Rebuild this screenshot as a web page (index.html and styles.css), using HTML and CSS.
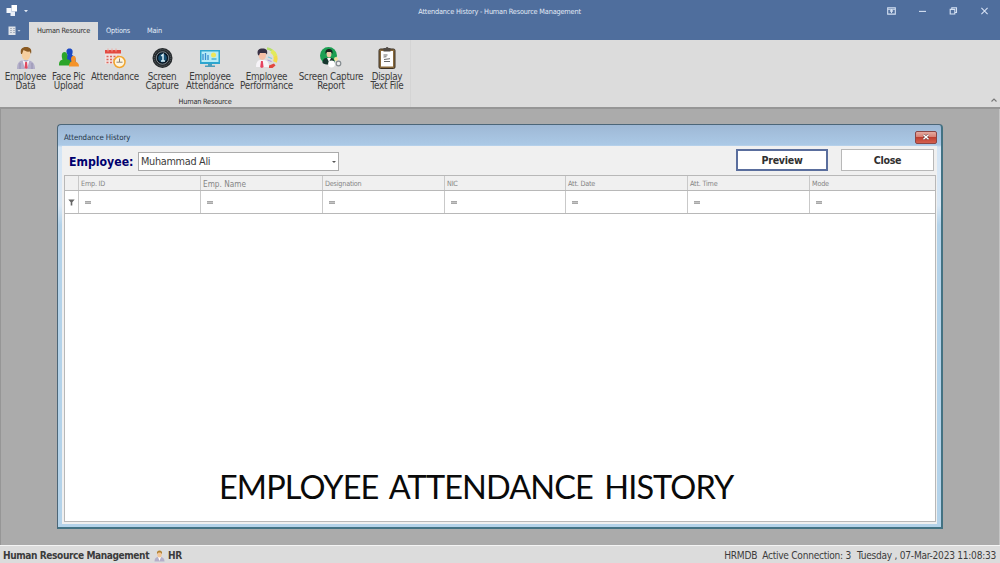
FILE: index.html
```html
<!DOCTYPE html>
<html lang="en">
<head>
    <meta charset="UTF-8">
    <meta name="viewport" content="width=device-width, initial-scale=1.0">
    <title>Attendance History - Human Resource Management</title>
    <link rel="stylesheet" href="styles.css">
</head>
<body>
    <header class="title-bar">
        <div class="quick-access">
            <svg width="24" height="14" viewBox="0 0 24 14">
                <path d="M5.500 1H11v6.500H5.500z" fill="#fff"/>
                <path d="M.5 4h5v5h-5z" fill="#f4f7fc"/>
                <path d="M4.500 7.500H9V12H4.500z" fill="#e9eff8"/>
                <path d="M18 6h4l-2 2.300z" fill="#dfe7f3"/>
            </svg>
        </div>
        <div class="app-title">Attendance History - Human Resource Management</div>
        <div class="window-buttons">
            <svg width="9" height="8" viewBox="0 0 9 8"><path d="M.7.700h7.600v6.400H.7zM.7 2.200h7.600M4.500 6V3M3 4.400L4.500 3 6 4.400"/></svg>
            <svg width="9" height="8" viewBox="0 0 9 8"><path d="M1 4.400h7"/></svg>
            <svg width="9" height="8" viewBox="0 0 9 8"><path d="M1.200 2.400h4.600v4.600H1.200zM2.800 2.400V.8h4.700v4.700H5.800"/></svg>
            <svg width="9" height="8" viewBox="0 0 9 8"><path d="M1.400.9l6.200 6.200M7.600.9L1.400 7.100"/></svg>
        </div>
    </header>

    <nav class="tabs">
        <div class="file-tab">
            <svg width="14" height="10" viewBox="0 0 14 10">
                <path d="M.5.500h7v8.500h-7z" fill="#dfe3e9"/>
                <path d="M2 2.500h2M2 4.500h2M2 6.500h2M5 2.500h2M5 4.500h2M5 6.500h2" stroke="#a3adbb" stroke-width=".9"/>
                <path d="M9.500 4h3L11 5.700z" fill="#b9c8de"/>
            </svg>
        </div>
        <div class="tab active">Human Resource</div>
        <div class="tab options">Options</div>
        <div class="tab main">Main</div>
    </nav>

    <section class="ribbon">
        <div class="ribbon-group">
            <div class="ribbon-items">
                <div class="ribbon-item w45">
                    <svg width="22" height="24" viewBox="0 0 22 24">
                        <path d="M2 23c0-6 2-8 6-9h5c4 1 7 3 7 9z" fill="#b3afca"/>
                        <path d="M7.500 14l3.500 2 3.500-2L12 23h-2z" fill="#f5f1f6"/>
                        <path d="M10.200 16h1.800l.7 6-1.600 1-1.600-1z" fill="#e0485f"/>
                        <path d="M5 17v6M17 17v6" stroke="#918ca8" stroke-width=".8"/>
                        <ellipse cx="11" cy="8.600" rx="4.300" ry="5.600" fill="#f6cf9f"/>
                        <path d="M6 8C5 3 7 1 11 1s6.200 2 5 7l-1.300-2.500C12 6 10 5 8.500 4L7 8z" fill="#8a5a22"/>
                    </svg>
                    <span>Employee<br>Data</span>
                </div>
                <div class="ribbon-item w41">
                    <svg width="22" height="24" viewBox="0 0 22 24">
                        <path d="M8 18c0-5-1-7 1.500-9-2-4-1-6.500 2-6.500s4 2.500 2.500 6.500c3 1 4 4 4 9z" fill="#1b49c4"/>
                        <path d="M1 19.500c0-4 1-5 3.500-6C3 9 4 6 6.500 6S10 9 9 13c3 1 4.500 2 4.500 6.500z" fill="#2ba52a"/>
                        <path d="M11 20.500c0-3 1-4 2.500-5-1-3.500 0-5.500 2-5.500s3 2 2 5.500c2 1 3.500 2 3.500 5z" fill="#f4932a"/>
                    </svg>
                    <span>Face Pic<br>Upload</span>
                </div>
                <div class="ribbon-item w52">
                    <svg width="22" height="24" viewBox="0 0 22 24">
                        <path d="M1 5h16v13H1z" fill="#f0e2e0"/>
                        <path d="M1 4h16v3.500H1z" fill="#e34a40"/>
                        <path d="M4 2.500v3M8 2.500v3M12 2.500v3" stroke="#f0a8a0"/>
                        <path d="M2.500 10.500h13M2.500 13.500h10M2.500 16.500h10" stroke="#dd665b" stroke-width="1.700" stroke-dasharray="2 1.500"/>
                        <circle cx="15.500" cy="16" r="5.500" fill="#fff5dd" stroke="#f0a52e" stroke-width="1.500"/>
                        <path d="M15.500 12.500v3.700h3M12.500 16.200h3" fill="none" stroke="#8c8375"/>
                    </svg>
                    <span>Attendance</span>
                </div>
                <div class="ribbon-item w42">
                    <svg width="22" height="24" viewBox="0 0 22 24">
                        <circle cx="11.500" cy="12" r="10" fill="#25292c"/>
                        <circle cx="11.500" cy="12" r="8.300" fill="none" stroke="#60676b" stroke-dasharray="1 1"/>
                        <circle cx="11.500" cy="12" r="6.200" fill="#07131f" stroke="#a5b1b7" stroke-width=".7"/>
                        <circle cx="11.500" cy="12" r="4.400" fill="#174e70"/>
                        <path d="M10.200 10l1.800-1.500V15M10 15h4" fill="none" stroke="#d9f0f7" stroke-width="1.500"/>
                    </svg>
                    <span>Screen<br>Capture</span>
                </div>
                <div class="ribbon-item w54">
                    <svg width="22" height="24" viewBox="0 0 22 24">
                        <path d="M1 4h20v14H1z" fill="#2da6cf"/>
                        <path d="M2.500 5.500h17v10.500h-17z" fill="#b6ecf7"/>
                        <path d="M4 8v6M6.500 7v7M9 9v5" stroke="#388fd0" stroke-width="1.300"/>
                        <circle cx="14.500" cy="9" r="2.500" fill="#efe65a"/>
                        <path d="M12.500 13h5" stroke="#3aa9cd" stroke-width="1.300"/>
                        <path d="M9 18h4v1.500h3V21H6v-1.500h3z" fill="#4b9dba"/>
                    </svg>
                    <span>Employee<br>Attendance</span>
                </div>
                <div class="ribbon-item w59">
                    <svg width="24" height="24" viewBox="0 0 24 24">
                        <path d="M12 2.500a10 10 0 0 1 5 2" stroke="#b7e06d" stroke-width="2.500" fill="none"/>
                        <path d="M16.500 5a9 9 0 0 1 4 5" stroke="#e2ea5c" stroke-width="4" fill="none"/>
                        <path d="M20.300 10a9 9 0 0 1-.3 6" stroke="#f3dc48" stroke-width="4" fill="none"/>
                        <path d="M14 19.500l5-2 1.500 2-3 2.500h-3.500z" fill="#e2473e"/>
                        <path d="M1 21c0-5 2-6.500 4-7h4c3 .5 5 2 5 7z" fill="#f7f4f8"/>
                        <path d="M6 15h1.800l.8 6-1.700 1-1.700-1z" fill="#e64460"/>
                        <ellipse cx="7.300" cy="9" rx="3.700" ry="5" fill="#f6bfa6"/>
                        <path d="M3 9C1.500 4 4 2.500 7.500 2.500S13 4 12 8.500L10.500 7H5L4 9.500z" fill="#373044"/>
                        <path d="M13 11l4 1.500" stroke="#7dc7e0" stroke-width="1.300"/>
                        <path d="M12.500 14l4 1.500" stroke="#a99be0"/>
                    </svg>
                    <span>Employee<br>Performance</span>
                </div>
                <div class="ribbon-item w70">
                    <svg width="24" height="24" viewBox="0 0 24 24">
                        <circle cx="9.500" cy="9.500" r="8.500" fill="#1b9f52"/>
                        <path d="M3.500 17c0-4 2-5 4-5h4c3 0 4 2 4 5-3 2-9 2-12 0z" fill="#16372e"/>
                        <path d="M8 12h4l-2 4z" fill="#fff"/>
                        <ellipse cx="10" cy="7.800" rx="2.400" ry="3.800" fill="#efc8a6"/>
                        <path d="M6.500 8C6 4 8 3 10 3s4.200 1 3.500 5L12 6H8z" fill="#192622"/>
                        <circle cx="12.500" cy="18" r="3.400" fill="#fff"/>
                        <circle cx="17" cy="13" r="2" fill="#f3dfa0"/>
                        <circle cx="19.500" cy="17.500" r="2.300" fill="#eee" stroke="#858c90" stroke-width="1.200"/>
                    </svg>
                    <span>Screen Capture<br>Report</span>
                </div>
                <div class="ribbon-item w42">
                    <svg width="22" height="24" viewBox="0 0 22 24">
                        <rect x="3" y="3" width="16" height="19.500" rx="1.500" fill="#8a6a3c" stroke="#3b3024"/>
                        <path d="M5 5h12v15.500H5z" fill="#fff"/>
                        <path d="M7.500 2h2.200a1.500 1.500 0 0 1 2.800 0h2v3.500h-7z" fill="#514b45"/>
                        <path d="M7.500 9h4M7.500 11l3-.3M8 13.500l6-.8M8 15.500h6" stroke="#444" stroke-width=".8"/>
                    </svg>
                    <span>Display<br>Text File</span>
                </div>
            </div>
            <div class="group-name">Human Resource</div>
        </div>
        <svg class="collapse" width="8" height="6" viewBox="0 0 8 6"><path d="M1.500 4.500L4 2l2.500 2.500" fill="none" stroke="#777" stroke-width="1.100"/></svg>
    </section>

    <main class="workspace">
        <div class="dialog">
            <div class="dialog-title">
                <span>Attendance History</span>
                <button class="dialog-x">
                    <svg width="8" height="6" viewBox="0 0 8 6"><path d="M1.500.8l5 4.400M6.500.8l-5 4.400" stroke="#6b3b3b" stroke-width="2.600"/><path d="M1.500.8l5 4.400M6.500.8l-5 4.400" stroke="#fff" stroke-width="1.500"/></svg>
                </button>
            </div>
            <div class="client">
                <div class="form-row">
                    <label class="employee-label">Employee:</label>
                    <div class="combo"><span>Muhammad Ali</span><i class="arrow"></i></div>
                    <button class="btn preview">Preview</button>
                    <button class="btn">Close</button>
                </div>
                <div class="grid">
                    <div class="grid-row grid-head">
                        <div></div>
                        <div>Emp. ID</div>
                        <div class="wide">Emp. Name</div>
                        <div>Designation</div>
                        <div>NIC</div>
                        <div>Att. Date</div>
                        <div>Att. Time</div>
                        <div>Mode</div>
                    </div>
                    <div class="grid-row grid-filter">
                        <div><svg width="7" height="7" viewBox="0 0 7 7"><path d="M.3.500h6.400L4.300 3.300v3.200H2.700V3.300z" fill="#666"/></svg></div>
                        <div><i></i></div>
                        <div><i></i></div>
                        <div><i></i></div>
                        <div><i></i></div>
                        <div><i></i></div>
                        <div><i></i></div>
                        <div><i></i></div>
                    </div>
                    <div class="caption">EMPLOYEE ATTENDANCE HISTORY</div>
                </div>
            </div>
        </div>
    </main>

    <footer class="status-bar">
        <b>Human Resource Management</b>
        <svg width="11" height="12" viewBox="0 0 11 12">
            <path d="M.5 11.500c0-3 1.500-4 3-4.500h3.500c2 .5 3.500 1.500 3.500 4.500z" fill="#b4afc9"/>
            <path d="M4 7h3l-1.500 4z" fill="#fff"/>
            <ellipse cx="5.500" cy="4.500" rx="2.200" ry="2.900" fill="#f2c597"/>
            <path d="M3 4C2.500 1.500 4 .5 5.500.5S8.500 1.500 8 4L6.500 2.500H4.500z" fill="#b0802f"/>
        </svg>
        <b>HR</b>
        <span class="status-db">HRMDB</span>
        <span class="status-conn">Active Connection: 3</span>
        <span>Tuesday , 07-Mar-2023 11:08:33</span>
    </footer>
</body>
</html>
```

FILE: styles.css
```css
:root {
    --blue: #4f6e9d;
    --ribbon: #dcdcdc;
    --line: #b8b8b8;
    --ink: #3c3c3c;
}

* {
    box-sizing: border-box;
}

body {
    margin: 0;
    height: 563px;
    overflow: hidden;
    display: flex;
    flex-direction: column;
    background: #ababab;
    color: var(--ink);
    font-family: "DejaVu Sans Condensed", "DejaVu Sans", sans-serif;
    font-stretch: condensed;
    white-space: nowrap;
}

svg {
    display: block;
    flex: none;
}

/* Title bar */
.title-bar {
    height: 22px;
    background: var(--blue);
    display: grid;
    grid-template-columns: 1fr auto 1fr;
    align-items: center;
    padding: 0 11px 0 6px;
}

.app-title {
    color: #e2eaf6;
    font-size: 7.3px;
    letter-spacing: -0.18px;
    padding-left: 4px;
}

.window-buttons {
    display: flex;
    justify-content: flex-end;
    gap: 22px;
}

.window-buttons path {
    fill: none;
    stroke: #d5e1f3;
    stroke-width: 1.1;
}

.tabs {
    height: 18px;
    background: var(--blue);
    display: flex;
    color: #e6eefa;
    font-size: 7.3px;
    letter-spacing: -0.2px;
    line-height: 18px;
}

.file-tab {
    width: 29px;
    padding: 4px 0 0 8px;
}

.tab.active {
    width: 69px;
    background: var(--ribbon);
    color: #303030;
    text-align: center;
}

.options {
    margin-left: 8px;
    width: 41px;
}

/* Ribbon */
.ribbon {
    height: 69px;
    background: var(--ribbon);
    border-bottom: 2px solid #969696;
    display: flex;
    justify-content: space-between;
    align-items: flex-end;
}

.ribbon-group {
    width: 411px;
    height: 67px;
    padding: 6px 0 0 3px;
    border-right: 1px solid #d4d4d4;
}

.ribbon-items {
    display: flex;
    height: 51px;
}

.ribbon-item {
    display: flex;
    flex-direction: column;
    align-items: center;
    text-align: center;
    font-size: 9.8px;
    letter-spacing: -0.26px;
    line-height: 9px;
}

.ribbon-item span {
    margin-top: 2px;
}

.w41 { width: 41px; }
.w42 { width: 42px; }
.w45 { width: 45px; }
.w52 { width: 52px; }
.w54 { width: 54px; }
.w59 { width: 59px; }
.w70 { width: 70px; }

.group-name {
    padding-right: 3px;
    text-align: center;
    font-size: 7.3px;
    letter-spacing: -0.2px;
    line-height: 10px;
    color: #303030;
}

.collapse {
    margin: 0 2px 4px 0;
}

/* Dialog */
.workspace {
    flex: 1;
    padding: 15px 57px 0 56px;
    border-left: 1px solid #969696;
    border-right: 1px solid #c4c4c4;
}

.dialog {
    width: 886px;
    height: 405px;
    padding: 0 4px 4px;
    border: 1px solid #4c6678;
    border-bottom: 2px solid #437283;
    border-right: 2px solid #437283;
    border-radius: 4px 4px 0 0;
    background: linear-gradient(#9eb8d5, #abc9e6 20px, #d4e5f5 22px, #dae8f5 80px, #b4d3ea 100px, #b4d3ea);
}

.dialog-title {
    height: 21px;
    padding: 3px 0 0 2px;
    display: flex;
    justify-content: space-between;
    align-items: center;
    color: #243447;
    font-size: 7.8px;
    letter-spacing: -0.06px;
}

.dialog-x {
    width: 22px;
    height: 13px;
    padding: 0;
    display: flex;
    align-items: center;
    justify-content: center;
    border: 1px solid #8b4545;
    border-radius: 2px;
    background: linear-gradient(#e5aaa0, #d88074 45%, #be3e30 50%, #d4604e);
}

.client {
    height: 378px;
    padding: 3px 1px 2px 2px;
    background: #f0f0f0;
}

.form-row {
    height: 26px;
    display: flex;
    align-items: flex-start;
}

.employee-label {
    flex: none;
    width: 74px;
    padding: 4px 0 0 5px;
    font-size: 12.2px;
    line-height: 18px;
    font-weight: bold;
    color: #00006e;
}

.combo {
    flex: none;
    width: 201px;
    height: 19px;
    margin: 3px 397px 0 0;
    padding: 0 2px;
    display: flex;
    align-items: center;
    justify-content: space-between;
    background: #fff;
    border: 1px solid #ababab;
    font-size: 10.8px;
    letter-spacing: -0.3px;
}

.arrow {
    border: 2px solid transparent;
    border-top-color: #555;
    border-bottom: 0;
}

.btn {
    width: 93px;
    height: 22px;
    padding: 0 0 1px;
    flex: none;
    background: #fff;
    border: 1px solid #b8b8b8;
    color: #303030;
    font: bold 10.6px "DejaVu Sans Condensed", "DejaVu Sans", sans-serif;
    font-stretch: condensed;
    letter-spacing: -0.3px;
}

.btn.preview {
    width: 92px;
    margin-right: 13px;
    border: 2px solid #5a6e9d;
}

.grid {
    height: 347px;
    border: 1px solid var(--line);
    background: #fff;
}

.grid-row {
    display: grid;
    grid-template-columns: 14px 122px 122px 122px 121px 122px 122px 1fr;
    border-bottom: 1px solid var(--line);
}

.grid-row > div {
    border-right: 1px solid #c9c9c9;
    display: flex;
    align-items: center;
}

.grid-row > div:last-child {
    border-right: 0;
}

.grid-head {
    height: 15px;
    background: #f0f0f0;
    color: #858585;
    font-size: 7.2px;
    letter-spacing: -0.2px;
}

.grid-head > div {
    padding-left: 2px;
}

.grid-head .wide {
    font-size: 8.2px;
    letter-spacing: 0;
    padding-top: 2px;
}

.grid-filter {
    height: 23px;
}

.grid-filter svg {
    margin-left: 3px;
}

.grid-filter i {
    width: 6px;
    height: 3px;
    margin-left: 6px;
    border: solid #a8a8a8;
    border-width: 1px 0;
    background: #c4c4c4;
}

.caption {
    height: 305px;
    padding: 253px 0 0 154px;
    color: #0a0a0a;
    font-family: Lato, sans-serif;
    font-size: 32.5px;
    letter-spacing: -0.9px;
    word-spacing: 4px;
    line-height: 40px;
}

/* Status bar */
.status-bar {
    height: 18px;
    padding: 2px 4px 0 3px;
    display: flex;
    align-items: center;
    background: var(--ribbon);
    border-top: 1px solid #f4f4f4;
    font-size: 10.1px;
    letter-spacing: -0.26px;
}

.status-bar b {
    letter-spacing: -0.42px;
}

.status-bar svg {
    margin: 0 3px 0 5px;
}

.status-db {
    margin-left: auto;
}

.status-conn {
    margin: 0 6px 0 5px;
}
```
